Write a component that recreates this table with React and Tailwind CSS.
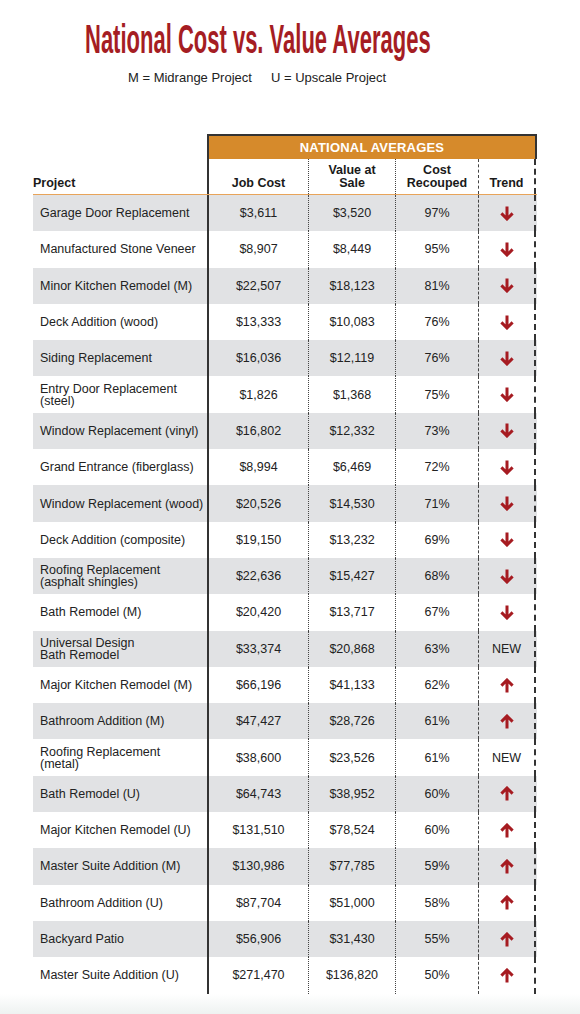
import React from "react";

const rows = [
  ["Garage Door Replacement", "$3,611", "$3,520", "97%", "down"],
  ["Manufactured Stone Veneer", "$8,907", "$8,449", "95%", "down"],
  ["Minor Kitchen Remodel (M)", "$22,507", "$18,123", "81%", "down"],
  ["Deck Addition (wood)", "$13,333", "$10,083", "76%", "down"],
  ["Siding Replacement", "$16,036", "$12,119", "76%", "down"],
  ["Entry Door Replacement\n(steel)", "$1,826", "$1,368", "75%", "down"],
  ["Window Replacement (vinyl)", "$16,802", "$12,332", "73%", "down"],
  ["Grand Entrance (fiberglass)", "$8,994", "$6,469", "72%", "down"],
  ["Window Replacement (wood)", "$20,526", "$14,530", "71%", "down"],
  ["Deck Addition (composite)", "$19,150", "$13,232", "69%", "down"],
  ["Roofing Replacement\n(asphalt shingles)", "$22,636", "$15,427", "68%", "down"],
  ["Bath Remodel (M)", "$20,420", "$13,717", "67%", "down"],
  ["Universal Design\nBath Remodel", "$33,374", "$20,868", "63%", "NEW"],
  ["Major Kitchen Remodel (M)", "$66,196", "$41,133", "62%", "up"],
  ["Bathroom Addition (M)", "$47,427", "$28,726", "61%", "up"],
  ["Roofing Replacement\n(metal)", "$38,600", "$23,526", "61%", "NEW"],
  ["Bath Remodel (U)", "$64,743", "$38,952", "60%", "up"],
  ["Major Kitchen Remodel (U)", "$131,510", "$78,524", "60%", "up"],
  ["Master Suite Addition (M)", "$130,986", "$77,785", "59%", "up"],
  ["Bathroom Addition (U)", "$87,704", "$51,000", "58%", "up"],
  ["Backyard Patio", "$56,906", "$31,430", "55%", "up"],
  ["Master Suite Addition (U)", "$271,470", "$136,820", "50%", "up"],
];

function Arrow({ dir }) {
  const d =
    dir === "down"
      ? "M7 0.5 V13 M1.4 7.4 L7 13 L12.6 7.4"
      : "M7 14.5 V2 M1.4 7.6 L7 2 L12.6 7.6";
  return (
    <svg width="14" height="15" viewBox="0 0 14 15" fill="none">
      <path d={d} stroke="#a61b21" strokeWidth="3" strokeLinecap="butt" strokeLinejoin="miter" />
    </svg>
  );
}

const gridCols = "grid grid-cols-[174px_101px_87px_83px_58px]";

export default function App() {
  return (
    <div
      className="w-[580px] h-[1014px] bg-white text-[#222] overflow-hidden flex flex-col"
      style={{ fontFamily: '"Liberation Sans", Arial, sans-serif' }}
    >
      <div className="pl-[85px] pt-[16px] h-[66px]">
        <span className="inline-block text-[40px] leading-[46px] font-bold text-[#a51d23] origin-left [transform:scaleX(0.55)] whitespace-nowrap">
          National Cost vs. Value Averages
        </span>
      </div>
      <div className="flex pl-[128px] text-[13px] leading-[16px] text-[#222] h-[68px] pt-[4px]">
        <span>M = Midrange Project</span>
        <span className="ml-[19px]">U = Upscale Project</span>
      </div>

      <div className="ml-[33px] w-[504px]">
        <div className="grid grid-cols-[174px_330px]">
          <div />
          <div className="border-t-2 border-x-2 border-[#333] bg-[#d68a2b] h-[25px] flex items-center justify-center text-white font-bold text-[13px] tracking-[0.2px] pt-[1px]">
            NATIONAL AVERAGES
          </div>
        </div>
        <div className={`${gridCols} h-[36px] border-b-[1.5px] border-[#e8a45a] font-bold text-[12.5px] leading-[13px] text-[#1a1a1a]`}>
          <div className="flex items-end pb-[4px]">Project</div>
          <div className="border-l-2 border-[#333] flex items-end justify-center pb-[4px]">Job Cost</div>
          <div className="border-l border-dotted border-[#444] flex items-end justify-center text-center pb-[4px]">
            Value at<br />Sale
          </div>
          <div className="border-l border-dotted border-[#444] flex items-end justify-center text-center pb-[4px]">
            Cost<br />Recouped
          </div>
          <div className="border-l border-dashed border-[#444] border-r-2 border-r-[#333] flex items-end justify-center pb-[4px]">
            Trend
          </div>
        </div>
        {rows.map((r, i) => (
          <div
            key={i}
            className={`${gridCols} h-[36.3px] text-[12.5px] leading-[12px] ${i % 2 === 0 ? "bg-[#e1e2e4]" : "bg-white"}`}
          >
            <div className="flex items-center pl-[7px] whitespace-pre-line">{r[0]}</div>
            <div className="border-l-2 border-[#333] flex items-center justify-center">{r[1]}</div>
            <div className="border-l border-dotted border-[#444] flex items-center justify-center">{r[2]}</div>
            <div className="border-l border-dotted border-[#444] flex items-center justify-center">{r[3]}</div>
            <div className="border-l border-dashed border-l-[#444] border-r-2 border-r-[#333] flex items-center justify-center">
              {r[4] === "NEW" ? <span>NEW</span> : <Arrow dir={r[4]} />}
            </div>
          </div>
        ))}
      </div>
      <div className="flex-1 bg-gradient-to-b from-white to-[#eef2f1]" />
    </div>
  );
}
